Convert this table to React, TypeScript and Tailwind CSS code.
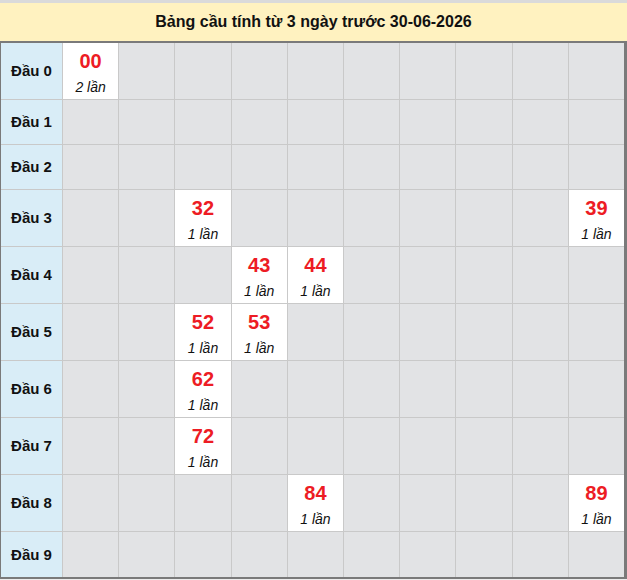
const hits: Record<string, number> = {
  "00": 2,
  "32": 1,
  "39": 1,
  "43": 1,
  "44": 1,
  "52": 1,
  "53": 1,
  "62": 1,
  "72": 1,
  "84": 1,
  "89": 1,
};

const rowHeights = ["h-[56px]", "h-[44px]", "h-[44px]", "h-[56px]", "h-[56px]", "h-[56px]", "h-[56px]", "h-[56px]", "h-[56px]", "h-[45px]"];

export default function App() {
  return (
    <div className="w-[627px] h-[580px] bg-[#ececec] font-['Liberation_Sans',Arial,sans-serif]">
      <div className="h-[41px] border-t-[3px] border-[#dadada] bg-[#fff2c0] flex items-center justify-center">
        <h1 className="text-[16px] font-bold text-[#111]">Bảng cầu tính từ 3 ngày trước 30-06-2026</h1>
      </div>

      <div className="border-l border-t-2 border-r-[3px] border-b-2 border-[#7a7a7a] bg-[#c9c9c9] grid grid-cols-[61px_repeat(10,1fr)] gap-px">
        {rowHeights.map((h, r) => (
          <div key={r} className="contents">
            <div className={`${h} bg-[#d9edf7] flex items-center justify-center pt-px text-[15px] font-bold text-[#111]`}>
              Đầu {r}
            </div>
            {Array.from({ length: 10 }).map((_, c) => {
              const num = `${r}${c}`;
              const count = hits[num];
              return count ? (
                <div key={c} className={`${h} bg-white flex flex-col items-center pt-[5px]`}>
                  <span className="text-[20px] leading-[26px] font-bold text-[#ed1c24]">{num}</span>
                  <span className="text-[14px] leading-[26px] italic text-[#111]">{count} lần</span>
                </div>
              ) : (
                <div key={c} className={`${h} bg-[#e2e3e5]`} />
              );
            })}
          </div>
        ))}
      </div>
    </div>
  );
}
